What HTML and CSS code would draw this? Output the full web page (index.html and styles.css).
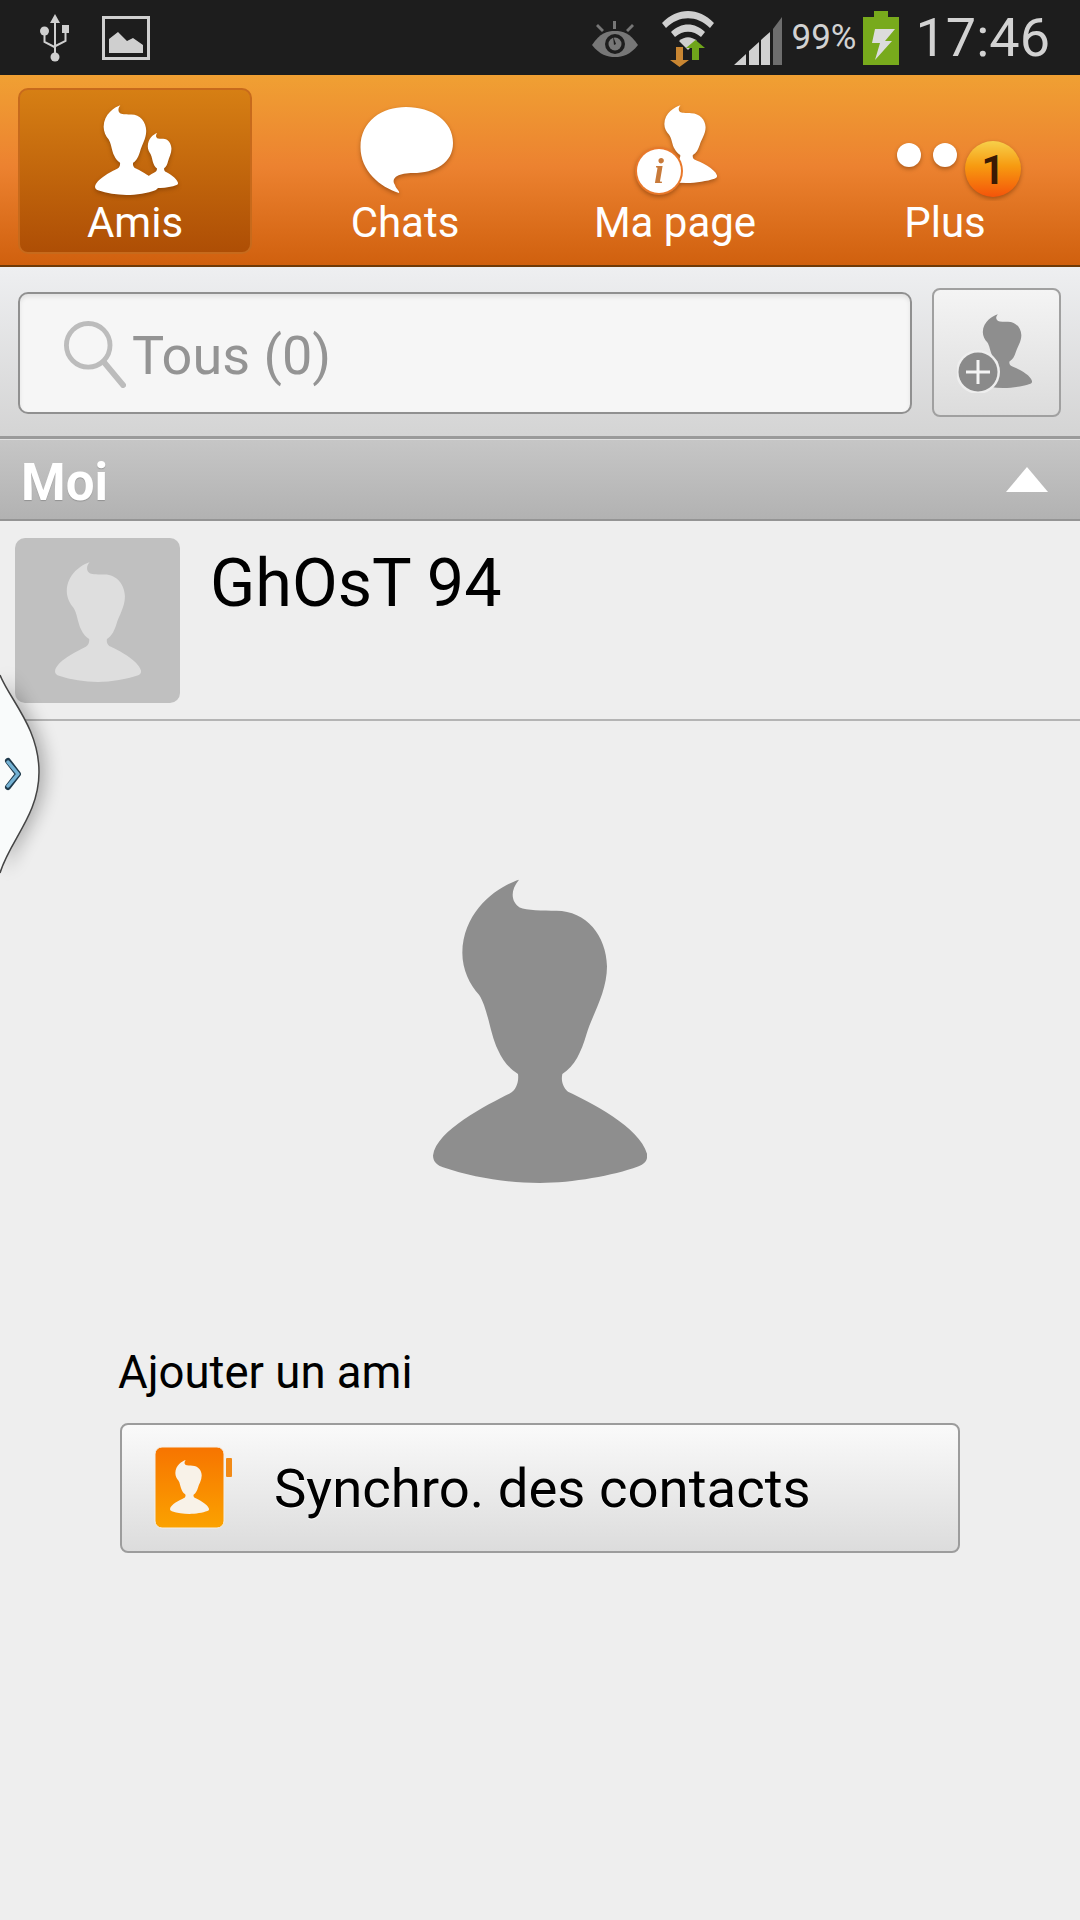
FILE: index.html
```html
<!DOCTYPE html>
<html lang="fr">
<head>
    <meta charset="UTF-8">
    <meta name="viewport" content="width=device-width, initial-scale=1.0">
    <title>Amis</title>
    <link rel="stylesheet" href="styles.css">
</head>
<body>

    <svg class="defs" width="0" height="0">
        <defs>
            <symbol id="perso" viewBox="100 60 642 907" preserveAspectRatio="none">
                <path d="M358 62C300 80 190 150 188 280C188 330 210 375 238 405C265 445 270 520 295 570C310 605 335 630 355 642C358 665 350 690 330 700C260 735 110 810 100 885C100 905 115 915 130 920C220 950 320 967 420 967C520 967 640 945 715 918C735 910 745 900 742 880C720 800 570 725 505 695C488 680 484 660 488 642C525 620 545 575 560 525C575 470 622 400 622 320C620 230 560 155 470 155C430 153 380 155 360 145C335 130 330 95 358 62Z"/>
            </symbol>
            <linearGradient id="badge-grad" x1="0" y1="0" x2="0" y2="1">
                <stop offset="0" stop-color="#f7d04a"/>
                <stop offset=".45" stop-color="#f79a10"/>
                <stop offset="1" stop-color="#f4540a"/>
            </linearGradient>
        </defs>
    </svg>

    <!-- Barre d'etat -->
    <div class="status">
        <div class="status-gauche">
            <svg class="ic-usb" width="30" height="48" viewBox="0 0 30 48">
                <path d="M14 8h2v32h-2z M15 0l5 9h-10z" fill="#cfcfcf"/>
                <circle cx="15" cy="43" r="4.5" fill="#cfcfcf"/>
                <circle cx="4.5" cy="17" r="4.5" fill="#cfcfcf"/>
                <path d="M22 11h7v8h-7z" fill="#cfcfcf"/>
                <path d="M4.5 20v8l10 5M25.500 18v9l-10 5" fill="none" stroke="#cfcfcf" stroke-width="2"/>
            </svg>
            <svg class="ic-image" width="48" height="44" viewBox="0 0 48 44">
                <rect x="1.500" y="1.500" width="45" height="41" fill="none" stroke="#cfcfcf" stroke-width="3"/>
                <path d="M7 37V23l9-7 9 9 6-3 10 7v8z" fill="#cfcfcf"/>
            </svg>
        </div>
        <div class="status-droite">
            <svg class="ic-oeil" width="46" height="36" viewBox="0 0 46 36">
                <path d="M0 24C8 12 15 10 23 10s15 2 23 14C38 34 31 36 23 36S8 34 0 24z" fill="#777"/>
                <circle cx="23" cy="23" r="10" fill="#1d1d1d"/>
                <circle cx="23" cy="23" r="6.500" fill="#777"/>
                <path d="M21 0h3v8h-3zM4 5l2-2 6 6-2 2zM42 5l-2-2-6 6 2 2z" fill="#777"/>
                <path d="M21 15l3 8-2 1z" fill="#1d1d1d"/>
            </svg>
            <svg class="ic-wifi" width="52" height="56" viewBox="0 0 52 56">
                <path d="M0 12C15-4 37-4 52 12l-4 5C35 4 17 4 4 17z" fill="#cfcfcf"/>
                <path d="M9 21c10-10 24-10 34 0l-4 5c-8-7-18-7-26 0z" fill="#cfcfcf"/>
                <path d="M17 30c6-5 12-5 18 0l-9 9z" fill="#cfcfcf"/>
                <path d="M14 36h7v13h6l-9.500 7L8 49h6z" fill="#c98632"/>
                <path d="M30 49V37h-6l9.500-8L43 37h-6v12z" fill="#6fa51b"/>
            </svg>
            <svg class="ic-reseau" width="48" height="48" viewBox="0 0 48 48">
                <path d="M0 48L12 37v11z M15 34l10-9v23H15z M27 23l9-8v33h-9z" fill="#d0d0d0"/>
                <path d="M39 12l9-12v48h-9z" fill="#6e6e6e"/>
            </svg>
            <span class="pourcent">99%</span>
            <svg class="ic-batterie" width="36" height="54" viewBox="0 0 36 54">
                <path d="M11 0h14v6h11v48H0V6h11z" fill="#78aa1c"/>
                <path d="M12 18h20L22 30h7L12 49l5-17H9z" fill="#dcdcdc"/>
            </svg>
            <span class="heure">17:46</span>
        </div>
    </div>

    <!-- Onglets -->
    <div class="onglets">
        <a href="#" class="onglet actif">
            <svg class="onglet-ic" width="270" height="100" viewBox="0 0 270 100">
                <g class="ombre">
                    <use href="#perso" x="143" y="32" width="35" height="55" fill="#fff"/>
                    <use href="#perso" x="95" y="4" width="63" height="90" fill="#fff"/>
                </g>
            </svg>
            <span>Amis</span>
        </a>
        <a href="#" class="onglet">
            <svg class="onglet-ic" width="270" height="100" viewBox="0 0 270 100">
                <path class="ombre" d="M90.500 46C90.500 20 112 6 136 6C162 6 183 20 183 42C183 62 165 72 143 72C130 72 120 76 125 84C126 88 130 90 129 92C110 86 90.500 70 90.500 46Z" fill="#fff"/>
            </svg>
            <span>Chats</span>
        </a>
        <a href="#" class="onglet">
            <svg class="onglet-ic" width="270" height="100" viewBox="0 0 270 100">
                <g class="ombre">
                    <use href="#perso" x="116" y="4" width="61" height="78" fill="#fff"/>
                    <circle cx="119" cy="70" r="24" fill="#e8782a"/>
                    <circle cx="119" cy="70" r="22" fill="#fff"/>
                    <text x="119" y="82" class="info">i</text>
                </g>
            </svg>
            <span>Ma page</span>
        </a>
        <a href="#" class="onglet">
            <svg class="onglet-ic" width="270" height="100" viewBox="0 0 270 100">
                <g class="ombre">
                    <circle cx="99" cy="54" r="12" fill="#fff"/>
                    <circle cx="135" cy="54" r="12" fill="#fff"/>
                    <circle cx="183" cy="68" r="28" fill="url(#badge-grad)"/>
                </g>
                <text x="183" y="83" class="compteur">1</text>
            </svg>
            <span>Plus</span>
        </a>
    </div>

    <!-- Recherche -->
    <div class="barre-recherche">
        <div class="recherche">
            <svg width="62" height="68" viewBox="0 0 64 70">
                <circle cx="25" cy="25" r="22.500" fill="none" stroke="#bcbcbc" stroke-width="5"/>
                <path d="M41 42l20 24" stroke="#bcbcbc" stroke-width="6" stroke-linecap="round"/>
            </svg>
            <span>Tous (0)</span>
        </div>
        <button class="ajout">
            <svg width="80" height="80" viewBox="0 0 80 80">
                <use href="#perso" x="18" y="1" width="57" height="74" fill="#8e8e8e"/>
                <circle cx="21" cy="59" r="22" fill="#eee"/>
                <circle cx="21" cy="59" r="19.500" fill="#8a8a8a"/>
                <path d="M19.500 47h3v10.500H33v3H22.500V71h-3V60.500H9v-3h10.500z" fill="#f4f4f4"/>
            </svg>
        </button>
    </div>

    <!-- Groupe Moi -->
    <div class="groupe">
        <h2>Moi</h2>
        <svg width="42" height="26" viewBox="0 0 42 26">
            <path d="M21 1L42 26H0z" fill="#fff"/>
        </svg>
    </div>

    <div class="ligne-moi">
        <div class="avatar">
            <svg width="86" height="120" viewBox="0 0 86 120">
                <use href="#perso" width="86" height="120" fill="#dedede"/>
            </svg>
        </div>
        <div class="nom">GhOsT 94</div>
    </div>

    <!-- Liste vide -->
    <div class="vide">
        <svg class="grand-perso" width="214" height="304" viewBox="0 0 214 304">
            <use href="#perso" width="214" height="304" fill="#8e8e8e"/>
        </svg>
        <div class="ajouter">
            <p>Ajouter un ami</p>
            <button class="synchro">
                <svg width="80" height="84" viewBox="0 0 80 84">
                    <defs>
                        <linearGradient id="synchro-grad" x1="0" y1="0" x2="0" y2="1">
                            <stop offset="0" stop-color="#f77400"/>
                            <stop offset="1" stop-color="#fba200"/>
                        </linearGradient>
                    </defs>
                    <rect x="1" y="1" width="69" height="81" rx="7" fill="url(#synchro-grad)" stroke="#f4f0e8"/>
                    <rect x="72" y="12" width="6" height="19" rx="1" fill="#f28a16"/>
                    <use href="#perso" x="16" y="14" width="39" height="54" fill="#f8f2e8"/>
                </svg>
                <span>Synchro. des contacts</span>
            </button>
        </div>
    </div>

    <!-- Poignee laterale -->
    <svg class="poignee" width="90" height="230" viewBox="0 0 90 230">
        <defs>
            <filter id="flou" x="-50%" y="-20%" width="200%" height="140%">
                <feGaussianBlur stdDeviation="9"/>
            </filter>
        </defs>
        <path d="M0 15C10 40 39 68 39 112C39 155 10 180 0 213Z" fill="#000" opacity=".28" filter="url(#flou)" transform="translate(6 0)"/>
        <path d="M0 15C10 40 39 68 39 112C39 155 10 180 0 213" fill="#f9fbfb" stroke="#444" stroke-width="1.500"/>
        <path d="M8 101l10 13-10 13" fill="none" stroke="#1f3a4c" stroke-width="6" stroke-linecap="round" stroke-linejoin="round"/>
        <path d="M8 102l10 12-10 12" fill="none" stroke="#74b2d4" stroke-width="3.500" stroke-linecap="round" stroke-linejoin="round"/>
    </svg>

</body>
</html>
```

FILE: styles.css
```css
/* Estilos gerais */
body {
    margin: 0;
    width: 1080px;
    height: 1920px;
    position: relative;
    overflow: hidden;
    background-color: #eeeeee;
    font-family: Roboto, "Liberation Sans", sans-serif;
}

.defs {
    position: absolute;
}

/* Barre d'etat */
.status {
    height: 75px;
    background-color: #1d1d1d;
    display: flex;
    justify-content: space-between;
    align-items: center;
    color: #d2d2d2;
}

.status-gauche {
    display: flex;
    align-items: center;
    gap: 32px;
    padding-left: 40px;
}

.status-droite {
    display: flex;
    align-items: center;
    padding-right: 30px;
}

.ic-oeil {
    margin-top: 2px;
}

.ic-wifi {
    margin-left: 24px;
    margin-top: 2px;
}

.ic-reseau {
    margin-left: 20px;
    margin-top: 6px;
}

.pourcent {
    font-size: 35px;
    margin-left: 10px;
}

.ic-batterie {
    margin-left: 6px;
}

.heure {
    font-size: 54px;
    margin-left: 17px;
}

/* Onglets */
.onglets {
    height: 190px;
    display: flex;
    background: linear-gradient(#f0a033, #ec8230 48%, #d0600e);
    border-bottom: 2px solid #6e3a08;
}

.onglet {
    flex: 1;
    position: relative;
    display: flex;
    flex-direction: column;
    align-items: center;
    padding-top: 26px;
    color: white;
    text-decoration: none;
    font-size: 42px;
    line-height: 46px;
}

.onglet.actif::before {
    content: "";
    position: absolute;
    left: 18px;
    right: 18px;
    top: 13px;
    bottom: 11px;
    background: linear-gradient(#d67f14, #ae4e05);
    border: 2px solid #c76a1c;
    border-radius: 10px;
    box-sizing: border-box;
}

.onglet-ic,
.onglet span {
    position: relative;
}

.onglet span {
    margin-top: -1px;
}

.ombre {
    filter: drop-shadow(0 2px 2px rgba(90, 40, 0, 0.45));
}

.info {
    font-family: "Liberation Serif", serif;
    font-style: italic;
    font-weight: bold;
    font-size: 36px;
    text-anchor: middle;
    fill: #c87a3a;
}

.compteur {
    font-family: Roboto, sans-serif;
    font-weight: bold;
    font-size: 40px;
    text-anchor: middle;
    fill: #3a1a04;
}

/* Recherche */
.barre-recherche {
    height: 172px;
    box-sizing: border-box;
    padding: 21px 19px 0 18px;
    display: flex;
    align-items: flex-start;
    justify-content: space-between;
    background: linear-gradient(#eeeff1, #d4d4d4);
    border-bottom: 3px solid #9a9a9a;
}

.recherche {
    width: 894px;
    height: 122px;
    margin-top: 4px;
    box-sizing: border-box;
    display: flex;
    align-items: center;
    gap: 6px;
    padding-left: 44px;
    background-color: #f6f6f6;
    border: 2px solid #909090;
    border-radius: 10px;
    box-shadow: inset 0 3px 4px rgba(0, 0, 0, 0.08);
    color: #949494;
    font-size: 54px;
}

.recherche svg {
    margin-top: 4px;
}

.recherche span {
    margin-top: 4px;
}

.ajout {
    width: 129px;
    height: 129px;
    padding: 0;
    display: flex;
    align-items: center;
    justify-content: center;
    background: linear-gradient(#f4f4f4, #dcdcdc);
    border: 2px solid #a0a0a0;
    border-radius: 8px;
}

/* Groupe */
.groupe {
    height: 82px;
    box-sizing: border-box;
    padding: 0 32px 0 21px;
    display: flex;
    align-items: center;
    justify-content: space-between;
    background: linear-gradient(#c6c6c6, #b2b2b2);
    border-top: 1px solid #e0e0e0;
    border-bottom: 2px solid #949494;
}

.groupe h2 {
    margin: 6px 0 0;
    color: white;
    font-size: 51px;
    font-weight: bold;
    text-shadow: 0 1px 1px rgba(0, 0, 0, 0.2);
}

.groupe svg {
    margin-bottom: 2px;
}

.ligne-moi {
    height: 200px;
    box-sizing: border-box;
    padding: 17px 15px 0;
    display: flex;
    gap: 30px;
    border-bottom: 2px solid #b4b4b4;
}

.avatar {
    width: 165px;
    height: 165px;
    display: flex;
    align-items: center;
    justify-content: center;
    background-color: #c0c0c0;
    border-radius: 10px;
}

.avatar svg {
    margin-top: 2px;
}

.nom {
    color: black;
    font-size: 66.500px;
    line-height: 72px;
    margin-top: 9px;
}

/* Liste vide */
.vide {
    display: flex;
    flex-direction: column;
    align-items: center;
}

.grand-perso {
    margin-top: 158px;
}

.ajouter {
    width: 844px;
    margin-top: 165px;
}

.ajouter p {
    margin: 0 0 25px;
    font-size: 45.500px;
    line-height: 50px;
    color: black;
}

.synchro {
    width: 840px;
    height: 130px;
    margin-left: 2px;
    padding: 0 0 0 32px;
    display: flex;
    align-items: center;
    gap: 40px;
    background: linear-gradient(#fafafa, #dcdcdc);
    border: 2px solid #9c9c9c;
    border-radius: 8px;
    font-family: inherit;
    font-size: 54.500px;
    color: black;
    text-shadow: 0 1px 1px white;
}

/* Poignee */
.poignee {
    position: absolute;
    left: 0;
    top: 660px;
}
```
